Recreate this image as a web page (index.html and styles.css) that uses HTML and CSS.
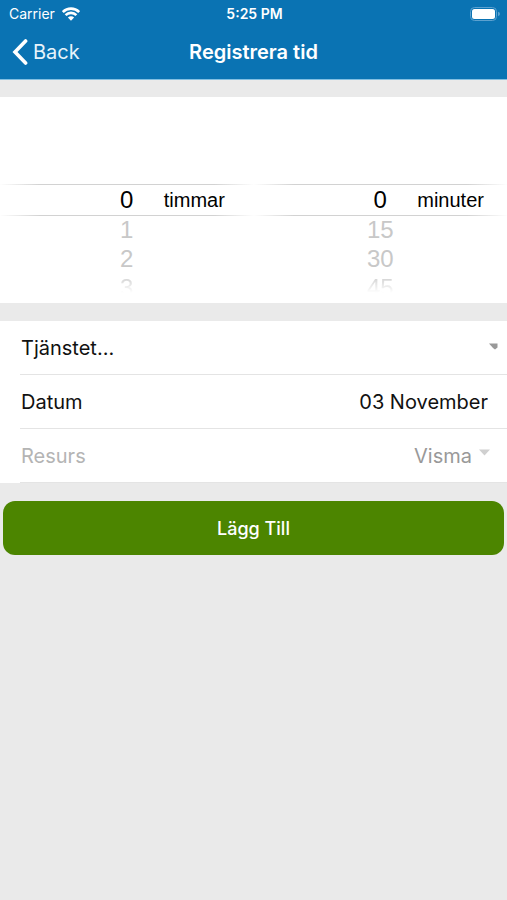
FILE: index.html
```
<!DOCTYPE html>
<html lang="sv">
<head>
    <meta charset="UTF-8">
    <meta name="viewport" content="width=device-width, initial-scale=1.0">
    <title>Registrera tid</title>
    <link rel="stylesheet" href="styles.css">
</head>
<body>
    <header class="header">
        <div class="status-bar">
            <div class="carrier">
                <span>Carrier</span>
                <svg class="wifi" viewBox="0 0 18 14" aria-hidden="true">
                    <path d="M.8 5a11.600 11.600 0 0 1 16.400 0M3.600 8.100a7.600 7.600 0 0 1 10.800 0" fill="none" stroke="#fff" stroke-width="2.6"/>
                    <path d="M5.900 10.600a4.400 4.400 0 0 1 6.200 0L9 13.800z" fill="#fff"/>
                </svg>
            </div>
            <div class="clock">5:25 PM</div>
            <svg class="battery" viewBox="0 0 30 14" aria-hidden="true">
                <rect x="0.5" y="0.5" width="26" height="13" rx="4" fill="none" stroke="#5ca1cf"/>
                <rect x="2" y="2" width="23" height="10" rx="2.500" fill="#fff"/>
                <path d="M28 4.800q2 .6 2 2.200t-2 2.200z" fill="#5ca1cf"/>
            </svg>
        </div>
        <nav class="nav-bar">
            <a href="#" class="back">
                <svg class="chevron" viewBox="0 0 16 26" aria-hidden="true">
                    <path d="M13.600 2 3 13l10.600 11" fill="none" stroke="#fff" stroke-width="3.6" stroke-linecap="round"/>
                </svg>
                <span>Back</span>
            </a>
            <h1 class="title">Registrera tid</h1>
        </nav>
    </header>

    <form class="time-form">
        <div class="picker">
            <div class="wheel" role="radiogroup" aria-label="timmar">
                <div class="selected">
                    <label class="option"><input type="radio" name="hours" checked>0</label>
                    <span class="unit">timmar</span>
                </div>
                <label class="option"><input type="radio" name="hours">1</label>
                <label class="option"><input type="radio" name="hours">2</label>
                <label class="option fading"><input type="radio" name="hours">3</label>
            </div>
            <div class="wheel" role="radiogroup" aria-label="minuter">
                <div class="selected">
                    <label class="option"><input type="radio" name="minutes" checked>0</label>
                    <span class="unit">minuter</span>
                </div>
                <label class="option"><input type="radio" name="minutes">15</label>
                <label class="option"><input type="radio" name="minutes">30</label>
                <label class="option fading"><input type="radio" name="minutes">45</label>
            </div>
        </div>

        <div class="fields">
            <div class="row row-service">
                <label for="service">Tjänstet...</label>
                <select id="service" class="value">
                    <option></option>
                </select>
                <svg class="arrow arrow-cut" viewBox="0 0 9 7" aria-hidden="true">
                    <path d="M0 .5h8.500v4L6 6.500 4 5z" fill="#999"/>
                </svg>
            </div>
            <div class="row">
                <label for="date">Datum</label>
                <input type="text" id="date" class="value" value="03 November">
            </div>
            <div class="row disabled">
                <label for="resource">Resurs</label>
                <select id="resource" class="value" disabled>
                    <option>Visma</option>
                </select>
                <svg class="arrow" viewBox="0 0 11 7" aria-hidden="true">
                    <path d="M0 .5h11L5.500 6.500z" fill="#d0d0d0"/>
                </svg>
            </div>
        </div>

        <button type="submit" class="button">Lägg Till</button>
    </form>
</body>
</html>
```
FILE: styles.css
```
body {
    font-family: Inter, sans-serif;
    font-size: 20px;
    background-color: #eaeaea;
    color: #111;
    margin: 0;
}
.header {
    background-color: #0a73b3;
    color: #fff;
    border-bottom: 1px solid #82bfe2;
}
.status-bar {
    display: grid;
    grid-template-columns: 1fr auto 1fr;
    align-items: center;
    height: 27px;
    padding: 0 7px 0 9px;
    font-size: 14px;
}
.carrier {
    display: flex;
    align-items: center;
    gap: 7px;
}
.wifi {
    width: 18px;
    height: 14px;
}
.clock {
    font-weight: 600;
}
.battery {
    width: 30px;
    height: 14px;
    justify-self: end;
}
.nav-bar {
    display: grid;
    grid-template-columns: 1fr auto 1fr;
    align-items: center;
    height: 50px;
    padding: 0 12px 2px;
}
.back {
    display: flex;
    align-items: center;
    gap: 5px;
    color: #e6f3fb;
    text-decoration: none;
}
.chevron {
    width: 16px;
    height: 26px;
}
.title {
    margin: 0;
    font-size: 20px;
    font-weight: 600;
}
.time-form {
    display: flex;
    flex-direction: column;
    gap: 18px;
    padding-top: 17px;
}
.picker {
    display: grid;
    grid-template-columns: 1fr 1fr;
    padding-top: 87px;
    background-color: #fff;
    font-family: "Liberation Sans", Arial, sans-serif;
}
.wheel {
    color: #c8c8c8;
}
.selected {
    display: grid;
    grid-template-columns: 1fr 74px 1fr;
    align-items: center;
    height: 30px;
    border: solid;
    border-width: 1px 0;
    border-image: linear-gradient(to right, #fff, #d2d2d2 16%, #d2d2d2 84%, #fff) 1;
    color: #000;
}
.selected .option {
    grid-column: 2;
}
.option {
    display: block;
    height: 29px;
    line-height: 28px;
    font-size: 24px;
    text-align: center;
}
.option input {
    position: absolute;
    opacity: 0;
    pointer-events: none;
}
.fading {
    -webkit-mask-image: linear-gradient(#000, transparent 65%);
    mask-image: linear-gradient(#000, transparent 65%);
}
.fields {
    background-color: #fff;
}
.row {
    display: flex;
    align-items: center;
    height: 53px;
    margin-left: 20px;
    padding: 0 19px 0 1px;
    border-bottom: 1px solid #e4e4e4;
}
.row-service {
    padding-right: 9px;
}
.value {
    flex: 1;
    min-width: 0;
    padding: 0;
    border: none;
    background: none;
    font: inherit;
    color: inherit;
    text-align: right;
    text-align-last: right;
    appearance: none;
}
.disabled {
    padding-right: 17px;
    color: #b4b4b4;
}
.disabled .value {
    color: #999;
    opacity: 1;
}
.arrow {
    width: 11px;
    height: 7px;
    margin: 0 0 6px 7px;
}
.arrow-cut {
    width: 9px;
    margin-bottom: 2px;
}
.button {
    height: 54px;
    margin: 0 3px;
    border: none;
    border-radius: 12px;
    background-color: #4c8500;
    color: #fff;
    font: inherit;
    font-size: 18px;
    font-weight: 500;
}
```
